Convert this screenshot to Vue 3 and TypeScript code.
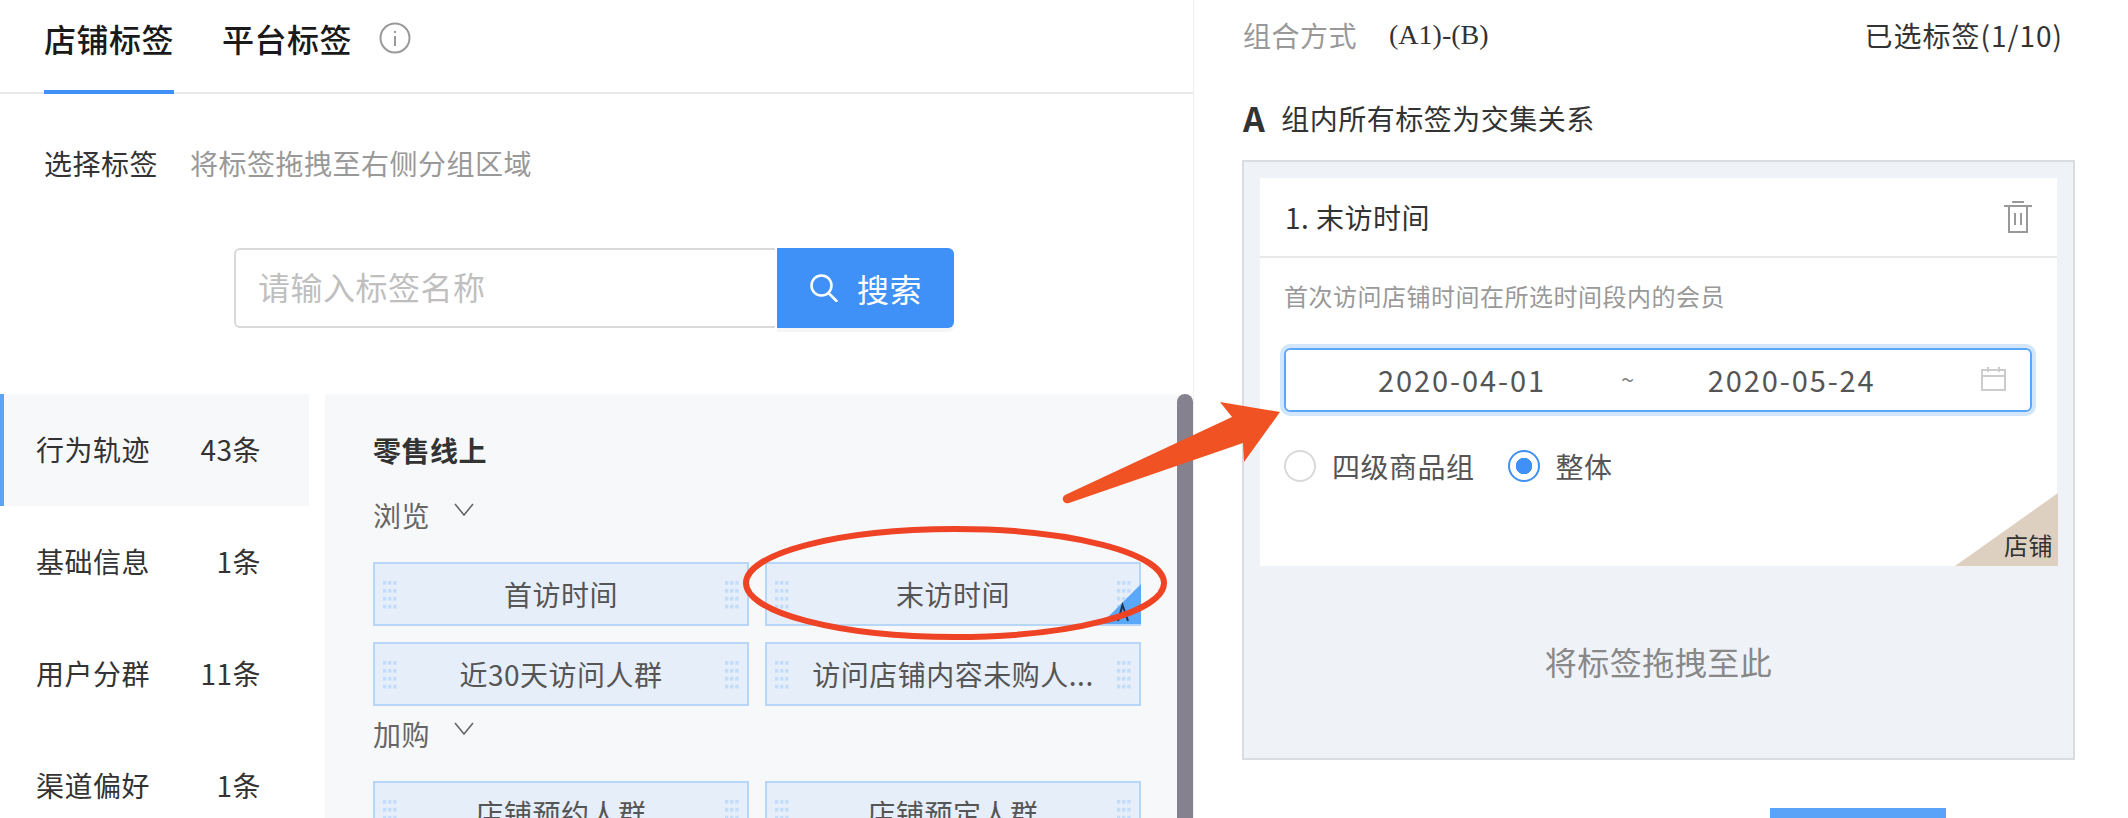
<script setup lang="ts">
const categories = [
  { name: '行为轨迹', count: '43条', active: true },
  { name: '基础信息', count: '1条', active: false },
  { name: '用户分群', count: '11条', active: false },
  { name: '渠道偏好', count: '1条', active: false },
]

const groups = [
  { name: '浏览', tags: ['首访时间', '末访时间', '近30天访问人群', '访问店铺内容未购人...'] },
  { name: '加购', tags: ['店铺预约人群', '店铺预定人群'] },
]

const gripDots: { x: number; y: number }[] = []
for (let col = 0; col < 3; col++) {
  for (let row = 0; row < 4; row++) {
    gripDots.push({ x: col * 5.5, y: row * 8.5 })
  }
}
</script>

<template>
  <div class="page">
    <section class="left">
      <div class="tabs">
        <span class="tab tab--active">店铺标签</span>
        <span class="tab">平台标签</span>
        <svg class="info" width="32" height="32" viewBox="0 0 32 32">
          <circle cx="16" cy="16" r="14.5" fill="none" stroke="#999" stroke-width="2" />
          <rect x="15" y="14" width="2" height="10" fill="#999" />
          <rect x="15" y="9" width="2" height="2" fill="#999" />
        </svg>
      </div>

      <div class="pick">
        <span class="pick__label">选择标签</span>
        <span class="pick__hint">将标签拖拽至右侧分组区域</span>
      </div>

      <div class="search">
        <div class="search__input">请输入标签名称</div>
        <div class="search__btn">
          <svg width="28" height="28" viewBox="0 0 28 28" fill="none" stroke="#fff" stroke-width="2.5">
            <circle cx="11.5" cy="11.5" r="10" />
            <line x1="18.5" y1="19" x2="26.5" y2="27" stroke-linecap="round" />
          </svg>
          <span>搜索</span>
        </div>
      </div>

      <div class="browse">
        <ul class="side">
          <li
            v-for="item in categories"
            :key="item.name"
            class="side__item"
            :class="{ 'side__item--active': item.active }"
          >
            <span>{{ item.name }}</span>
            <span>{{ item.count }}</span>
          </li>
        </ul>

        <div class="panel">
          <h3 class="panel__title">零售线上</h3>
          <div v-for="group in groups" :key="group.name" class="group">
            <div class="group__name">
              <span>{{ group.name }}</span>
              <svg class="chevron" width="20" height="13" viewBox="0 0 20 13" fill="none" stroke="#666" stroke-width="1.6">
                <polyline points="1,1 10,12 19,1" />
              </svg>
            </div>
            <div class="tags">
              <div v-for="tag in group.tags" :key="tag" class="tag">
                <svg class="grip" width="14" height="29" viewBox="0 0 15 29">
                  <rect v-for="d in gripDots" :key="`${d.x}-${d.y}`" :x="d.x" :y="d.y" width="3.5" height="4" fill="#c3dcf9" />
                </svg>
                <span class="tag__text">{{ tag }}</span>
                <svg class="grip" width="14" height="29" viewBox="0 0 15 29">
                  <rect v-for="d in gripDots" :key="`${d.x}-${d.y}`" :x="d.x" :y="d.y" width="3.5" height="4" fill="#c3dcf9" />
                </svg>
                <svg v-if="tag === '末访时间'" class="tag__corner" width="40" height="40" viewBox="0 0 40 40">
                  <polygon points="40,0 40,40 0,40" fill="#5ba8f8" />
                  <path d="M17 37 L21.500 21 L27 37" fill="none" stroke="#1f3350" stroke-width="2" />
                </svg>
              </div>
            </div>
          </div>
        </div>

        <div class="scrollbar"></div>
      </div>
    </section>

    <section class="right">
      <div class="head">
        <span class="head__label">组合方式</span>
        <span class="head__formula">(A1)-(B)</span>
        <span class="head__count">已选标签(1/10)</span>
      </div>

      <div class="rule">
        <b>A</b>
        <span>组内所有标签为交集关系</span>
      </div>

      <div class="box">
        <div class="card">
          <div class="card__head">
            <span>1. 末访时间</span>
            <svg width="28" height="32" viewBox="0 0 28 32" fill="#999">
              <rect x="8" y="0" width="12" height="2" />
              <rect x="0" y="4" width="28" height="2" />
              <rect x="10" y="12" width="2" height="12" />
              <rect x="16" y="12" width="2" height="12" />
              <path d="M5 6 V31 H23 V6" fill="none" stroke="#999" stroke-width="2" />
            </svg>
          </div>
          <div class="card__body">
            <p class="card__desc">首次访问店铺时间在所选时间段内的会员</p>
            <div class="range">
              <span class="range__date">2020-04-01</span>
              <span class="range__sep">~</span>
              <span class="range__date range__date--end">2020-05-24</span>
              <svg class="range__icon" width="25" height="24" viewBox="0 0 25 24" fill="none" stroke="#ccc" stroke-width="2">
                <rect x="1" y="3" width="23" height="20" />
                <line x1="1" y1="9" x2="24" y2="9" />
                <line x1="7" y1="0" x2="7" y2="5" />
                <line x1="18" y1="0" x2="18" y2="5" />
              </svg>
            </div>
            <div class="radios">
              <label class="radio">
                <i class="radio__dot"></i>
                <span>四级商品组</span>
              </label>
              <label class="radio radio--on">
                <i class="radio__dot"></i>
                <span>整体</span>
              </label>
            </div>
          </div>
          <div class="card__corner"></div>
          <span class="card__owner">店铺</span>
        </div>
        <div class="drop">将标签拖拽至此</div>
      </div>

      <div class="submit"></div>
    </section>

    <svg class="marks" width="2128" height="818" viewBox="0 0 2128 818">
      <ellipse cx="955" cy="583" rx="209" ry="54" fill="none" stroke="#ee4324" stroke-width="6" />
      <path
        d="M1280 412 L1220 402 L1232 417 L1065 495 Q1061 498 1064 502 Q1066 504 1069 503 L1243 443 L1244 462 Z"
        fill="#f05223"
      />
    </svg>
  </div>
</template>

<style>
html,
body {
  margin: 0;
  overflow: hidden;
  background: #fff;
}
</style>

<style scoped>
.page {
  position: relative;
  display: flex;
  width: 2128px;
  height: 818px;
  overflow: hidden;
  background: #fff;
  font-family: "Noto Sans CJK SC", "Noto Sans", sans-serif;
  font-size: 28px;
  line-height: 40px;
  letter-spacing: 0.5px;
  color: #333;
}

.left {
  width: 1194px;
  flex-shrink: 0;
  box-sizing: border-box;
  border-right: 1px solid #eee;
}

.tabs {
  display: flex;
  align-items: flex-start;
  height: 94px;
  box-sizing: border-box;
  padding-left: 44px;
  border-bottom: 2px solid #e8e8e8;
}

.tab {
  height: 92px;
  box-sizing: border-box;
  padding-top: 18px;
  margin-right: 48px;
  font-size: 32px;
  font-weight: 500;
  color: #1a1a1a;
}

.tab--active {
  border-bottom: 4px solid #4091f7;
  height: 94px;
}

.info {
  margin: 22px 0 0 -21px;
}

.pick {
  display: flex;
  gap: 32px;
  margin: 49px 0 0 44px;
}

.pick__hint {
  color: #999;
}

.search {
  display: flex;
  width: 720px;
  height: 80px;
  margin: 65px 0 0 234px;
}

.search__input {
  width: 541px;
  box-sizing: border-box;
  padding-left: 22px;
  border: 2px solid #d9d9d9;
  border-right: 0;
  border-radius: 6px 0 0 6px;
  font-size: 32px;
  line-height: 73px;
  color: #bfbfbf;
}

.search__btn {
  display: flex;
  align-items: center;
  gap: 19px;
  width: 177px;
  margin-left: 2px;
  box-sizing: border-box;
  padding-left: 33px;
  border-radius: 0 6px 6px 0;
  background: #4091f7;
  box-shadow: 0 4px 0 rgba(0, 0, 0, 0.04);
  font-size: 32px;
  line-height: 76px;
  color: #fff;
}

.browse {
  display: flex;
  height: 424px;
  margin-top: 66px;
  overflow: hidden;
}

.side {
  width: 309px;
  flex-shrink: 0;
  margin: 0 16px 0 0;
  padding: 0;
  list-style: none;
}

.side__item {
  display: flex;
  justify-content: space-between;
  align-items: center;
  height: 112px;
  padding: 0 48px 2px 36px;
  box-sizing: border-box;
  color: #333;
}

.side__item--active {
  background: #f7f8fa;
  box-shadow: inset 4px 0 0 #5ba5f8;
}

.panel {
  flex: 1;
  box-sizing: border-box;
  padding: 36px 35px 0 48px;
  background: #f7f8fa;
}

.panel__title {
  margin: 0 0 25px;
  font-size: 28px;
  font-weight: 700;
  line-height: 40px;
  color: #333;
}

.group {
  margin-bottom: 8px;
}

.group__name {
  display: flex;
  align-items: center;
  gap: 24px;
  margin-bottom: 27px;
  color: #666;
}

.chevron {
  margin: 0 0 12px;
}

.tags {
  display: grid;
  grid-template-columns: 376px 376px;
  gap: 16px;
}

.tag {
  position: relative;
  display: flex;
  align-items: center;
  height: 64px;
  box-sizing: border-box;
  padding: 0 8px;
  border: 2px solid #b8d6f8;
  background: #e6eefa;
  color: #555;
}

.grip {
  flex-shrink: 0;
}

.tag__text {
  flex: 1;
  text-align: center;
  white-space: nowrap;
  letter-spacing: 0.5px;
}

.tag__corner {
  position: absolute;
  right: -2px;
  bottom: 0;
}

.scrollbar {
  width: 16px;
  flex-shrink: 0;
  border-radius: 8px 8px 0 0;
  background: #85818f;
}

.right {
  flex: 1;
  padding: 15px 0 0 48px;
}

.head {
  display: flex;
  align-items: center;
  margin: 0 65px 0 1px;
}

.head__label {
  color: #999;
}

.head__formula {
  margin-left: 32px;
  font-family: "Liberation Serif", serif;
  letter-spacing: 0;
}

.head__count {
  margin-left: auto;
  letter-spacing: 1px;
}

.rule {
  display: flex;
  align-items: center;
  gap: 16px;
  margin: 43px 0 0 1px;
}

.rule b {
  font-size: 34px;
  font-weight: 700;
}

.box {
  display: flex;
  flex-direction: column;
  width: 833px;
  height: 600px;
  box-sizing: border-box;
  margin-top: 22px;
  padding: 16px 16px 0;
  border: 2px solid #d9dce0;
  background: #eff2f7;
}

.card {
  position: relative;
  height: 388px;
  background: #fff;
}

.card__head {
  display: flex;
  justify-content: space-between;
  align-items: center;
  height: 80px;
  box-sizing: border-box;
  padding: 0 25px 0 25px;
  border-bottom: 2px solid #e8e8e8;
}

.card__body {
  padding: 22px 25px 0 24px;
}

.card__desc {
  margin: 0;
  font-size: 24px;
  line-height: 32px;
  color: #999;
}

.range {
  display: flex;
  align-items: center;
  height: 64px;
  box-sizing: border-box;
  margin-top: 36px;
  padding: 0 24px 2px 92px;
  border: 2px solid #5ba8f8;
  border-radius: 6px;
  box-shadow: 0 0 0 4px #d3e6fc;
  color: #555;
}

.range__date {
  font-size: 29px;
  letter-spacing: 1.9px;
}

.range__date--end {
  margin-left: 73px;
}

.range__sep {
  margin-left: 75px;
  font-size: 24px;
  color: #888;
}

.range__icon {
  margin-left: auto;
}

.radios {
  display: flex;
  gap: 33px;
  margin-top: 34px;
}

.radio {
  display: flex;
  align-items: center;
  gap: 16px;
  color: #555;
}

.radio__dot {
  width: 32px;
  height: 32px;
  box-sizing: border-box;
  border: 2px solid #d9d9d9;
  border-radius: 50%;
}

.radio--on .radio__dot {
  border-color: #4091f7;
  background: radial-gradient(circle, #4091f7 0 8px, transparent 8.5px);
}

.card__corner {
  position: absolute;
  right: -1px;
  bottom: 0;
  width: 103px;
  height: 73px;
  background: #ddd0c0;
  clip-path: polygon(100% 0, 100% 100%, 0 100%);
}

.card__owner {
  position: absolute;
  right: 4px;
  bottom: 5px;
  font-size: 24px;
  line-height: 32px;
  color: #333;
}

.drop {
  flex: 1;
  display: flex;
  align-items: center;
  justify-content: center;
  padding-bottom: 2px;
  font-size: 32px;
  color: #888;
}

.submit {
  width: 176px;
  height: 10px;
  margin: 48px 0 0 528px;
  background: #5ba3f8;
}

.marks {
  position: absolute;
  left: 0;
  top: 0;
  pointer-events: none;
}
</style>
